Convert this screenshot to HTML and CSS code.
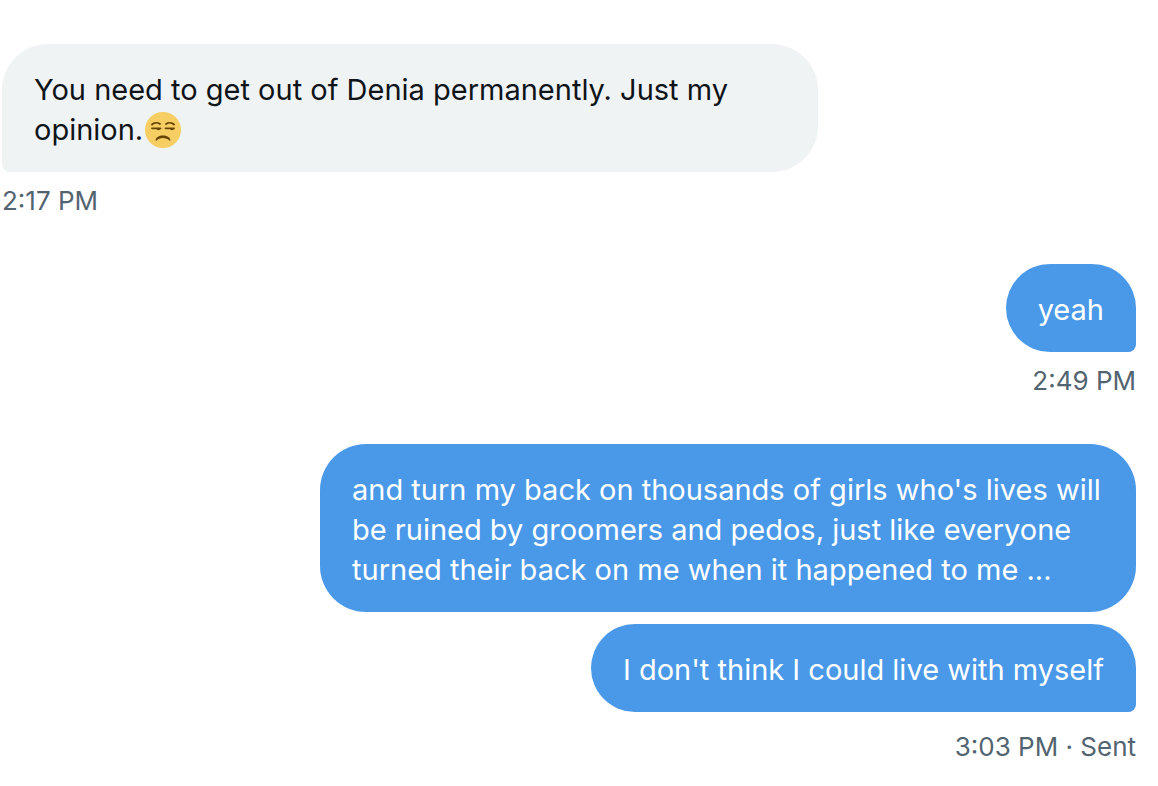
FILE: index.html
```html
<!DOCTYPE html>
<html lang="en">
<head>
<meta charset="utf-8">
<meta name="viewport" content="width=device-width, initial-scale=1">
<title>Messages</title>
<link rel="stylesheet" href="styles.css">
</head>
<body>
<main class="thread">
  <section class="group received">
    <p class="bubble">You need to get out of Denia permanently. Just my opinion.<svg class="emoji" viewBox="0 0 36 36" role="img" aria-label="Unamused face"><circle cx="18" cy="18" r="18" fill="#f7ce64"/><g fill="none" stroke="#664500" stroke-width="1.800" stroke-linecap="round" stroke-linejoin="round"><path d="M7 12.500C9 10.500 12.500 10.300 15 12M21 12C23.500 10.300 27 10.500 29 12.500M7 16.300h8.500M20.500 16.300H29"/></g><path d="M11.500 16.500h4q0 1.800-2 1.800t-2-1.800M25 16.500h4q0 1.800-2 1.800t-2-1.800M10.600 28C11.200 25.200 14 23.600 18 23.600S24.800 25.200 25.400 28C25.500 28.700 25 28.800 24.400 28.400C22.500 27 20.500 26.100 18 26.100S13.500 27 11.600 28.400C11 28.800 10.500 28.700 10.600 28Z" fill="#664500"/></svg></p>
    <time class="meta">2:17 PM</time>
  </section>
  <section class="group sent">
    <p class="bubble">yeah</p>
    <time class="meta">2:49 PM</time>
  </section>
  <section class="group sent final">
    <p class="bubble continued">and turn my back on thousands of girls who's lives will be ruined by groomers and pedos, just like everyone turned their back on me when it happened to me ...</p>
    <p class="bubble">I don't think I could live with myself</p>
    <div class="meta"><time>3:03 PM</time> · Sent</div>
  </section>
</main>
</body>
</html>
```
FILE: styles.css
```css
body {
  margin: 0;
  background: #fff;
  color: #0f1419;
  font-family: Inter, "Liberation Sans", sans-serif;
}
.thread {
  display: flex;
  flex-direction: column;
  gap: 47px;
  padding: 44px 22px 22px 2px;
}
.group {
  display: flex;
  flex-direction: column;
  align-items: flex-start;
}
.bubble {
  box-sizing: border-box;
  max-width: 816px;
  margin: 0;
  padding: 26px 32px 22px;
  border-radius: 46px 46px 46px 8px;
  background: #eff3f4;
  font-size: 29px;
  line-height: 40px;
}
.meta {
  margin-top: 13px;
  color: #536471;
  font-size: 26px;
  line-height: 32px;
}
.sent {
  align-items: flex-end;
}
.sent .bubble {
  border-radius: 46px 46px 8px 46px;
  background: #4a99e9;
  color: #fff;
}
.sent .continued {
  margin-bottom: 12px;
  border-radius: 46px;
}
.final .meta {
  margin-top: 19px;
}
.emoji {
  width: 36px;
  height: 36px;
  margin: 0 2px;
  vertical-align: -8px;
}
```
